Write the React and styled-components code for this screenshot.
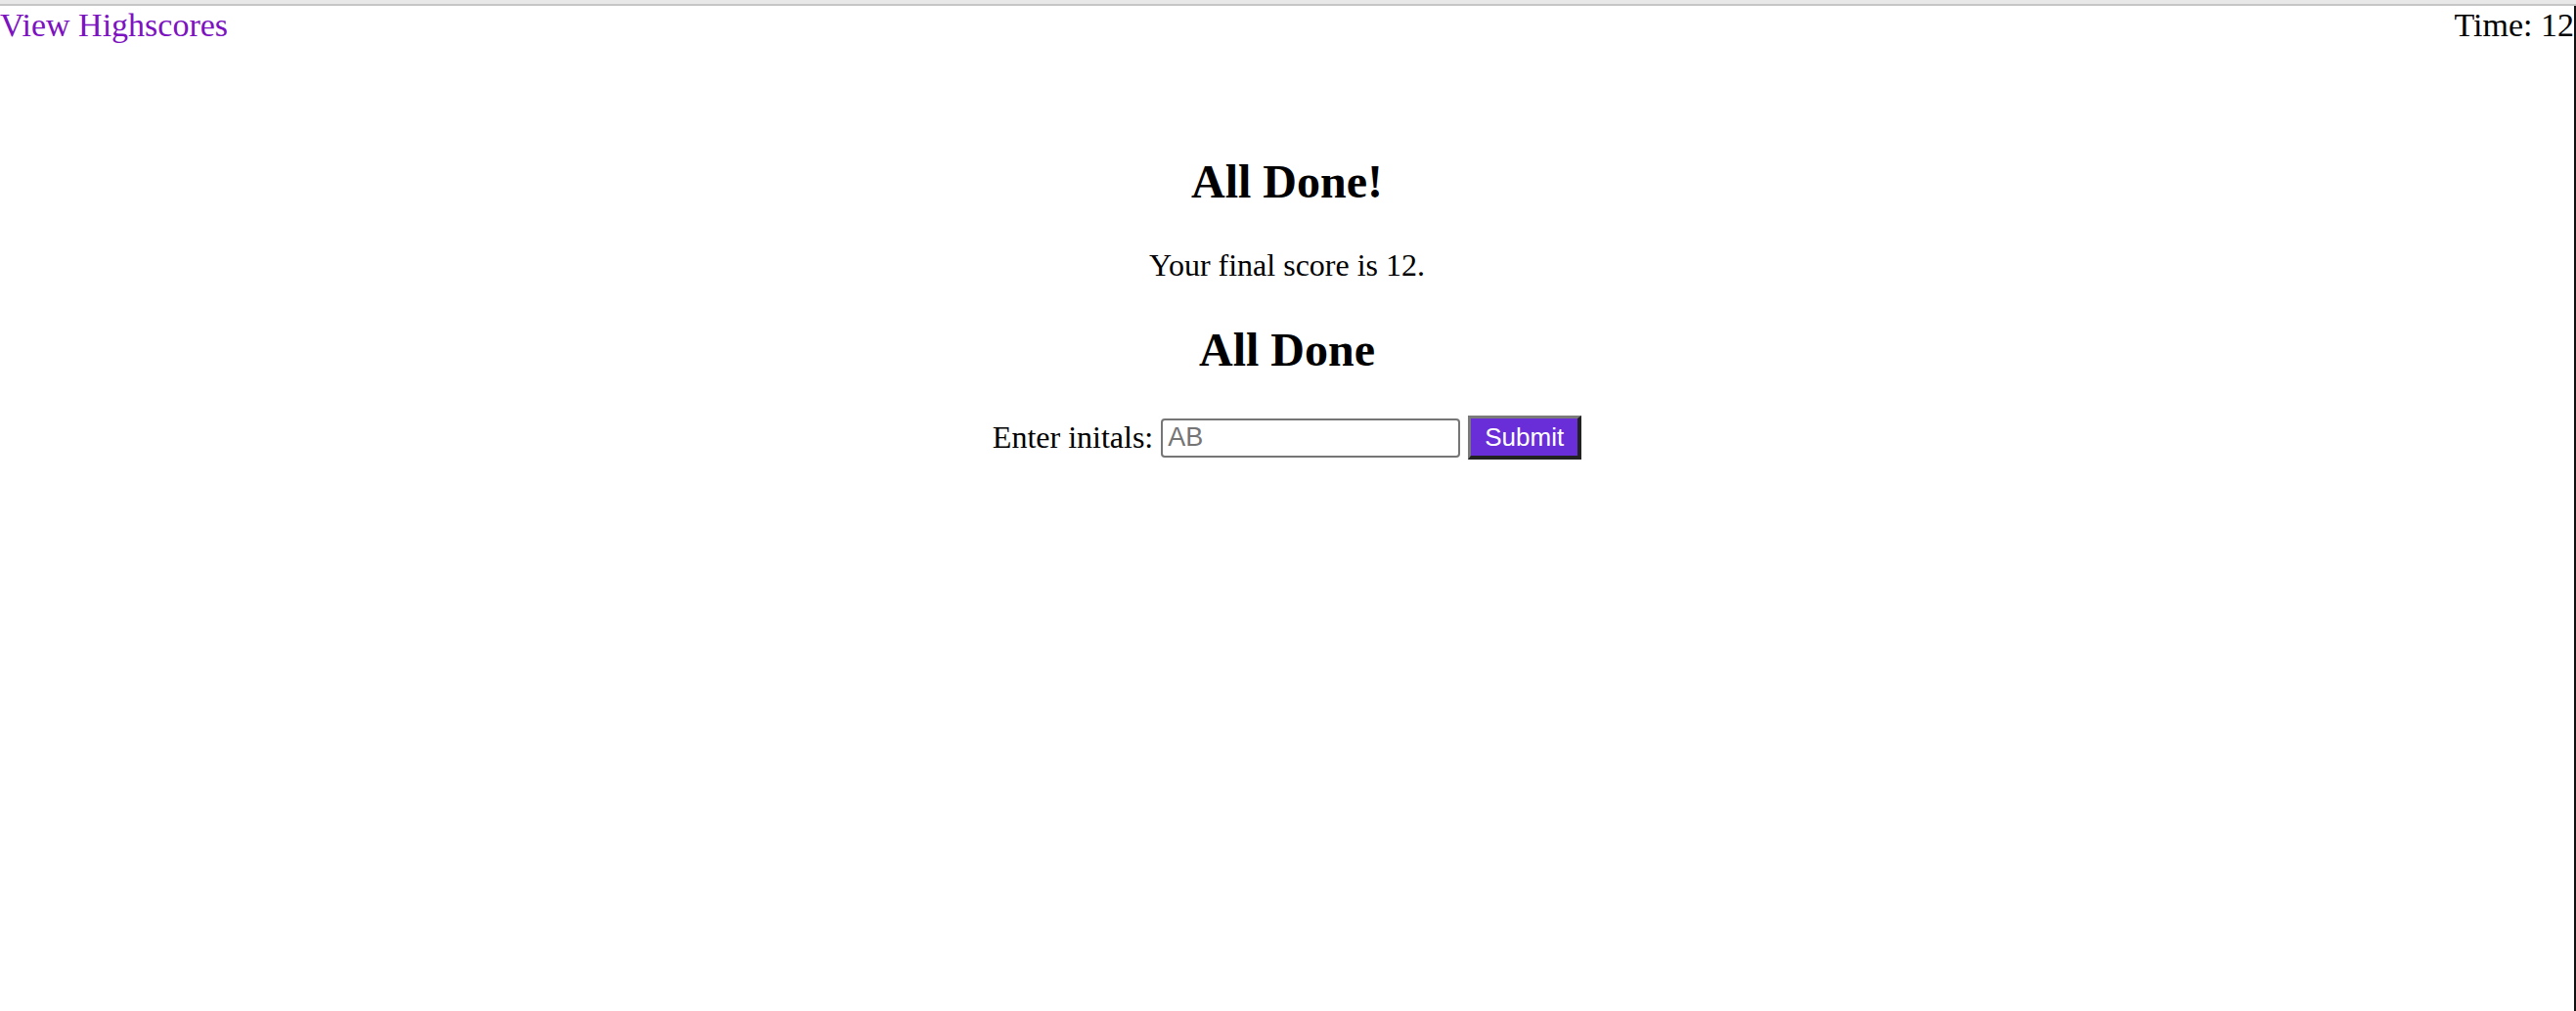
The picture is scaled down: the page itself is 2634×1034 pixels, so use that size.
import React from 'react';
import styled, { createGlobalStyle } from 'styled-components';

const GlobalStyle = createGlobalStyle`
    html, body {
        margin: 0;
        padding: 0;
        background: #fff;
    }
    body {
        font-family: "Liberation Serif", "Times New Roman", serif;
        font-size: 32px;
        color: #000;
    }
`;

// the thin grey strip along the top of the window
const TopStrip = styled.div`
    height: 4px;
    background: #e8e8e8;
    border-bottom: 2px solid #c6c6c6;
`;

const Page = styled.div`
    min-height: calc(100vh - 6px);
    border-right: 2px solid #111;
    box-sizing: border-box;
`;

const Header = styled.header`
    display: flex;
    justify-content: space-between;
    align-items: flex-start;
    font-size: 34px;
    line-height: 40px;
`;

const HighscoreLink = styled.a`
    color: #7c12c0;
    text-decoration: none;
    cursor: pointer;
`;

const Timer = styled.span`
    color: #000;
`;

const Main = styled.main`
    text-align: center;
    padding-top: 72px;
`;

const Title = styled.h2`
    font-size: 48px;
    font-weight: bold;
    margin: 40px 0;
    line-height: 55px;
`;

const Score = styled.p`
    margin: 32px 0;
    line-height: 37px;
`;

const InitialsForm = styled.form`
    display: flex;
    justify-content: center;
    align-items: center;
    gap: 8px;
`;

const Label = styled.label`
    line-height: 37px;
`;

const InitialsInput = styled.input`
    width: 306px;
    height: 40px;
    box-sizing: border-box;
    border: 2px solid #767676;
    border-radius: 4px;
    padding: 2px 5px;
    font-family: "Liberation Sans", Arial, sans-serif;
    font-size: 27px;
    color: #000;
    &::placeholder {
        color: #757575;
    }
`;

const SubmitButton = styled.button`
    height: 45px;
    padding: 0 14px;
    background: #6a2ed9;
    color: #fff;
    font-family: "Liberation Sans", Arial, sans-serif;
    font-size: 26px;
    border-style: solid;
    border-width: 3px 4px 4px 3px;
    border-color: #7a7a7a #222 #222 #7a7a7a;
    cursor: pointer;
`;

export default function App() {
    const time = 12;
    const score = 12;

    return <>
        <GlobalStyle />
        <TopStrip />
        <Page>
            <Header>
                <HighscoreLink>View Highscores</HighscoreLink>
                <Timer>Time: {time}</Timer>
            </Header>

            <Main>
                <Title>All Done!</Title>
                <Score>Your final score is {score}.</Score>
                <Title>All Done</Title>
                <InitialsForm onSubmit={e => e.preventDefault()}>
                    <Label htmlFor="initials">Enter initals:</Label>
                    <InitialsInput id="initials" placeholder="AB" />
                    <SubmitButton type="submit">Submit</SubmitButton>
                </InitialsForm>
            </Main>
        </Page>
    </>
}
